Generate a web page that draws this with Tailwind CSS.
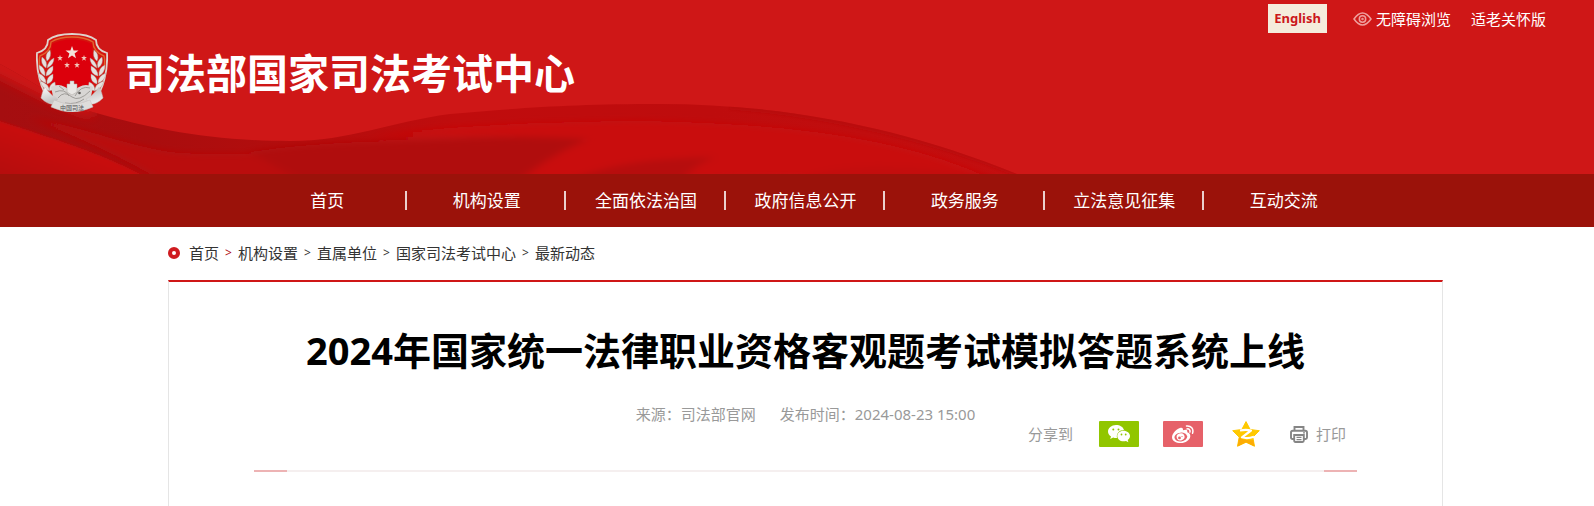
<!DOCTYPE html>
<html lang="zh-CN">
<head>
<meta charset="utf-8">
<meta name="viewport" content="width=device-width, initial-scale=1">
<title>2024年国家统一法律职业资格客观题考试模拟答题系统上线</title>
<script src="https://cdn.jsdelivr.net/npm/@tailwindcss/browser@4"></script>
</head>
<body class="bg-white font-['Noto_Sans','Noto_Sans_CJK_SC',sans-serif] text-[15px] leading-5 text-[#333]">
<header class="relative h-[174px] overflow-hidden bg-[#cf1717]">
  <!-- Silk ribbon backdrop -->
  <svg class="absolute left-0 top-0" width="1100" height="174" viewBox="0 0 1100 174" aria-hidden="true">
    <defs>
      <linearGradient id="silk" x1="0" x2="1017" y1="0" y2="0" gradientUnits="userSpaceOnUse">
        <stop offset="0" stop-color="#a50e10"/><stop offset=".14" stop-color="#a90d0e"/><stop offset=".3" stop-color="#b40d0d"/><stop offset=".45" stop-color="#c00c0d"/><stop offset=".7" stop-color="#be0c0d"/><stop offset="1" stop-color="#c40e0f"/>
      </linearGradient>
      <linearGradient id="fold" x1="40" x2="20" y1="128" y2="182" gradientUnits="userSpaceOnUse">
        <stop offset="0" stop-color="#cb0e0f"/><stop offset="1" stop-color="#b50c0d"/>
      </linearGradient>
      <clipPath id="silkClip"><path d="M0 64C35 82 60 104 100 114C150 128 210 141 290 141C350 141 390 122 450 114C520 108 570 104 660 104C780 104 900 126 1017 174H0Z"/></clipPath>
      <filter id="soft" x="-10%" y="-30%" width="120%" height="160%"><feGaussianBlur stdDeviation="5 3"/></filter>
      <filter id="wide" x="-30%" y="-60%" width="160%" height="220%"><feGaussianBlur stdDeviation="6"/></filter>
      <filter id="edge" x="-10%" y="-30%" width="120%" height="160%"><feGaussianBlur stdDeviation="1"/></filter>
    </defs>
    <g clip-path="url(#silkClip)">
      <path fill="url(#silk)" d="M0 60H1100V174H0Z"/>
      <g filter="url(#soft)">
        <path fill="#ba0c0d" d="M30 118C90 128 130 148 180 153C230 156 280 152 320 148C290 160 300 170 330 186H170C130 160 80 138 30 118Z"/>
        <path fill="#b00c0d" d="M250 152C330 140 400 142 470 138L590 136L525 180H300Z"/>
        <path fill="#c90f10" d="M520 180C545 160 570 146 590 139C500 136 440 134 370 137C440 126 540 122 640 121C800 124 900 140 980 174Z"/>
        <path fill="#b60c0d" d="M560 184C600 168 630 159 715 157C700 164 690 168 680 184Z"/>
        <path fill="#c30d0e" d="M790 184C820 166 880 160 990 176V184Z"/>
      </g>
      <path filter="url(#edge)" fill="url(#fold)" d="M-10 118C50 138 100 152 152 180H-10Z"/>
      <path filter="url(#edge)" fill="none" stroke="#b30c0e" stroke-width="5" opacity=".5" d="M730 107C830 115 930 139 1017 174"/>
      <path filter="url(#wide)" fill="none" stroke="#cf1717" stroke-width="20" d="M-30 52C25 76 55 98 95 108"/>
    </g>
  </svg>
  <div class="relative flex items-start justify-between">
    <a href="#" class="flex items-center gap-4 pl-9 pt-[33px]">
      <!-- Judicial emblem -->
      <svg width="72" height="79" viewBox="0 0 72 79" aria-hidden="true">
        <defs><linearGradient id="silver" x1="0" x2="1" y1="0" y2="1"><stop offset="0" stop-color="#fff"/><stop offset=".5" stop-color="#c4c4c4"/><stop offset="1" stop-color="#f4f4f4"/></linearGradient></defs>
        <path d="M36 1C48 1 56 4 60 7C60 13 64 18 71 20C72 38 67 57 59 66H13C5 57 0 38 1 20C8 18 12 13 12 7C16 4 24 1 36 1Z" fill="#d5140f" stroke="#dfd3cc" stroke-width="1.800"/>
        <path d="M4 36C3 30 3 26 4 23C11 20 15 15 15 9C20 6 28 4 36 4C44 4 52 6 57 9C57 15 61 20 68 23C69 26 69 30 68 36" fill="none" stroke="#e0652f" stroke-width="1.400"/>
        <path d="M36 6.500C46 6.500 52 9 56 11C57 27 60 42 55 56H17C12 42 15 27 16 11C20 9 26 6.500 36 6.500Z" fill="#dc000c"/>
        <path d="M36 13L37.600 17.500H42.500L38.600 20.500L40 25.200L36 22.400L32 25.200L33.400 20.500L29.500 17.500H34.400Z" fill="#f3e3da"/>
        <g fill="#f0c4b8">
          <path id="smallStar" d="M24 22L24.700 24.100H26.900L25.200 25.500L25.800 27.700L24 26.400L22.200 27.700L22.800 25.500L21.100 24.100H23.300Z"/>
          <use href="#smallStar" x="24"/><use href="#smallStar" x="7" y="7"/><use href="#smallStar" x="17" y="7"/>
        </g>
        <g id="wheat" fill="#e6e1de" stroke="#a39a96" stroke-width=".4">
          <path d="M14 17Q8 22 11 28Q16 24 14 17ZM6 24Q4 31 10 35Q12 28 6 24ZM18 25Q12 28 11 35Q18 32 18 25ZM3 32Q3 40 9 43Q10 35 3 32ZM17 33Q10 36 10 43Q18 41 17 33ZM2 40Q3 48 10 50Q10 43 2 40ZM17 41Q10 44 11 51Q18 49 17 41ZM4 48Q6 56 14 58Q12 50 4 48ZM19 49Q13 51 13 58Q21 57 19 49Z"/>
        </g>
        <use href="#wheat" transform="matrix(-1 0 0 1 72 0)"/>
        <path d="M15 54Q22 50 29 54Q36 59 43 54Q50 50 57 54L54 68Q36 75 18 68Z" fill="#d8d6d4"/>
        <path d="M31 59V51H34V48H38V51H41V59L36 62Z" fill="#e9e7e5" stroke="#aaa5a1" stroke-width=".5"/>
        <path d="M19 59Q29 55 33 63M22 65Q28 57 36 64Q43 69 54 58M39 63Q45 52 54 55M28 57L23 53M29 70Q40 72 48 66" fill="none" stroke="#999693" stroke-width=".9"/>
        <circle cx="43.500" cy="60" r="1.300" fill="#5d5a58"/>
        <path d="M9 54Q6 59 5 65Q12 72 18 71L22 66Q15 63 9 54ZM63 54Q66 59 67 65Q60 72 54 71L50 66Q57 63 63 54Z" fill="url(#silver)" stroke="#c9c5c2" stroke-width=".5"/>
        <path d="M18 67Q36 75 54 67L57 74Q46 79 36 79Q26 79 15 74Z" fill="#dedddb" stroke="#c2bfbc" stroke-width=".5"/>
        <text x="36" y="76.500" text-anchor="middle" font-size="6" font-weight="700" fill="#777" font-family="Noto Sans CJK SC, sans-serif">中国司法</text>
      </svg>
      <span class="whitespace-nowrap text-[41px] font-bold leading-[60px] text-white">司法部国家司法考试中心</span>
    </a>
    <div class="flex items-center pr-12 pt-1 text-white">
      <a href="#" class="bg-[#f5ecdc] px-1.5 text-[13px] font-bold leading-[29px] text-[#cb171b]">English</a>
      <a href="#" class="ml-[26px] flex items-center gap-1">
        <svg width="19" height="14" viewBox="0 0 19 14" fill="none" stroke="#ef9f9d" stroke-width="1.500" aria-hidden="true"><path d="M1 7Q9.500-5 18 7Q9.500 19 1 7Z"/><circle cx="9.500" cy="7" r="3.200"/><circle cx="9.500" cy="7" r=".5"/></svg>
        <span class="leading-[18px]">无障碍浏览</span>
      </a>
      <a href="#" class="ml-5 leading-[18px]">适老关怀版</a>
    </div>
  </div>
</header>
<nav class="bg-[#9b120a] pl-[17px]" aria-label="主导航">
  <ul class="mx-auto grid w-[70vw] grid-cols-7 py-[17px] text-center text-[17px] leading-[19px] text-white">
    <li class="border-r-2 border-[#ebcfcd] pl-0.5"><a href="#">首页</a></li>
    <li class="border-r-2 border-[#ebcfcd] pl-0.5"><a href="#">机构设置</a></li>
    <li class="border-r-2 border-[#ebcfcd] pl-0.5"><a href="#">全面依法治国</a></li>
    <li class="border-r-2 border-[#ebcfcd] pl-0.5"><a href="#">政府信息公开</a></li>
    <li class="border-r-2 border-[#ebcfcd] pl-0.5"><a href="#">政务服务</a></li>
    <li class="border-r-2 border-[#ebcfcd] pl-0.5"><a href="#">立法意见征集</a></li>
    <li><a href="#">互动交流</a></li>
  </ul>
</nav>
<main class="pl-[17px]">
  <div class="mx-auto w-[80vw]">
    <div class="flex items-center pb-[17px] pt-4">
      <span class="mr-[9px] size-3 rounded-full border-4 border-[#cf1b20]"></span>
      <nav class="flex" aria-label="面包屑">
        <a href="#">首页</a><span class="w-[19px] text-center text-xs leading-5 text-[#b00c12]">&gt;</span>
        <a href="#">机构设置</a><span class="w-[19px] text-center text-xs leading-5">&gt;</span>
        <a href="#">直属单位</a><span class="w-[19px] text-center text-xs leading-5">&gt;</span>
        <a href="#">国家司法考试中心</a><span class="w-[19px] text-center text-xs leading-5">&gt;</span>
        <a href="#">最新动态</a>
      </nav>
    </div>
    <article class="min-h-[226px] border-x border-t-2 border-x-[#e5e5e5] border-t-[#cf1717] px-[85px] pt-[38px] text-[#999]">
      <h1 class="text-center text-[38px] font-bold leading-[60px] text-black">2024年国家统一法律职业资格客观题考试模拟答题系统上线</h1>
      <p class="mt-6 flex justify-center gap-6"><span>来源：司法部官网</span><span>发布时间：2024-08-23 15:00</span></p>
      <div class="-mt-[3px] flex items-center justify-end pr-[11px]">
        <span>分享到</span>
        <button type="button" aria-label="分享到微信" class="ml-[26px] flex h-[26px] w-10 items-center justify-center rounded-[1px] bg-[#91c600]">
          <svg width="22" height="18" viewBox="0 0 22 18" aria-hidden="true"><path fill="#fff" d="M8 0C3.500 0 0 3 0 6.500C0 8.500 1.100 10.200 3 11.400L2.200 14L5.200 12.500Q7 13.200 9 13C8 8.500 11.500 5 16 5C15.200 2 12 0 8 0Z"/><path fill="#fff" d="M15.500 5.700C12 5.700 9.300 8 9.300 11C9.300 14 12 16.300 15.500 16.300Q16.700 16.300 18 15.900L20.400 17.300L19.700 15C21 14 22 12.600 22 11C22 8 19 5.700 15.500 5.700Z"/><g fill="#91c600"><circle cx="5.300" cy="4.600" r="1"/><circle cx="10.500" cy="4.600" r="1"/><circle cx="13.500" cy="9.500" r=".9"/><circle cx="17.700" cy="9.500" r=".9"/></g></svg>
        </button>
        <button type="button" aria-label="分享到微博" class="ml-6 flex h-[26px] w-10 items-center justify-center rounded-[1px] bg-[#e66169]">
          <svg width="22" height="18" viewBox="0 0 22 18" aria-hidden="true"><path fill="#fff" d="M8.700 2.700C10.500 2.400 11.400 3.400 10.900 5.300C13.500 4.300 16 4.600 15.200 7.300C17 7.800 18.500 9 18.300 11.200C18 15 13.500 18 8.800 18C4 18 0 15.800 0 12.200C0 8.300 5 3.200 8.700 2.700Z"/><ellipse cx="8.800" cy="12" rx="6.400" ry="4.400" fill="#e66169" transform="rotate(-7 9 12)"/><ellipse cx="8.600" cy="12.100" rx="4" ry="3.500" fill="#fff" transform="rotate(-20 8 12)"/><circle cx="7.500" cy="12.900" r="1.400" fill="#e66169"/><circle cx="10" cy="11.500" r=".6" fill="#e66169"/><path d="M14.500 1C19 .3 22 4 20.500 8.200M15 3.900C17.200 3.500 18.500 5.200 17.900 7.100" fill="none" stroke="#fff" stroke-width="1.500" stroke-linecap="round"/></svg>
        </button>
        <button type="button" aria-label="分享到QQ空间" class="ml-[29px]">
          <svg class="block" width="28" height="26" viewBox="0 0 28 26" aria-hidden="true"><path fill="#ffc900" stroke="#ffc900" stroke-linejoin="round" d="M14 .6L18.200 8.500L27.300 9.700L20.800 16.200L22.500 25.200L14 21.200L5.500 25.200L7.200 16.200L.7 9.700L9.800 8.500Z"/><path fill="#fdac05" d="M5.500 25.500L7.200 16.200Q12 20 21.300 19L22.500 25.500L14 21.200Z"/><path d="M8 9.500Q14 8.400 19 9.500L10 16.300Q15 18 22 15.800" fill="none" stroke="#fff" stroke-width="2.200" stroke-linejoin="round"/></svg>
        </button>
        <button type="button" class="ml-[30px] flex items-center gap-2">
          <svg width="18" height="17" viewBox="0 0 18 17" fill="none" stroke="#858585" stroke-width="1.900" aria-hidden="true"><path d="M4.500 4.500V1H13.500V4.500M4 13H2.500Q1 13 1 11.500V6.500Q1 4.800 2.700 4.800H15.300Q17 4.800 17 6.500V11.500Q17 13 15.500 13H14"/><path d="M4.200 9H13.800V14.500Q13.800 16 12.500 16H5.500Q4.200 16 4.200 14.500Z"/><path d="M6.500 11.400H11.500M6.500 13.600H11.500M13 6.900H15" stroke-width="1.200"/></svg>
          打印
        </button>
      </div>
      <div class="mt-[23px] flex h-0.5 justify-between bg-[#f5efef]"><span class="w-[33px] bg-[#edb3b4]"></span><span class="w-[33px] bg-[#edb3b4]"></span></div>
    </article>
  </div>
</main>
</body>
</html>
